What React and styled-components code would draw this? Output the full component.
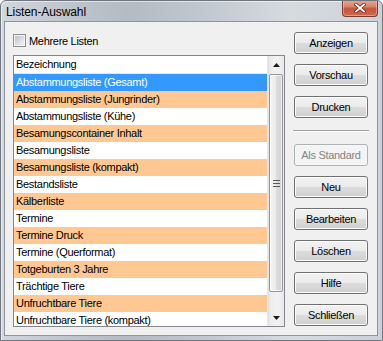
import React from "react";
import styled, { createGlobalStyle } from "styled-components";

const GlobalStyle = createGlobalStyle`
  html, body { margin: 0; padding: 0; background: #fff; }
  body {
    font-family: "Liberation Sans", Arial, sans-serif;
    font-size: 11px;
    letter-spacing: -0.3px;
    color: #000;
  }
  * { box-sizing: border-box; }
`;

const Window = styled.div`
  width: 383px;
  height: 341px;
  display: flex;
  flex-direction: column;
  border: 1px solid #6f767e;
  border-radius: 6px 6px 0 0;
  background: linear-gradient(to right, #d2d7dd 0%, #c0c6cd 16%, #b5bbc3 34%, #c3c9d0 55%, #d6dbe0 76%, #cbd1d7 100%);
  box-shadow: inset 1px 1px 0 rgba(255, 255, 255, 0.55);
  overflow: hidden;
`;

const TitleBar = styled.div`
  height: 20px;
  flex: none;
  display: flex;
  align-items: flex-start;
  justify-content: space-between;
  padding-left: 5px;
`;

const Title = styled.span`
  font-size: 12px;
  letter-spacing: -0.1px;
  line-height: 22px;
  color: #000;
`;

const CloseButton = styled.div`
  width: 36px;
  height: 17px;
  margin: -1px 4px 0 0;
  display: flex;
  align-items: center;
  justify-content: center;
  border: 1px solid #7a3a30;
  border-top: none;
  border-radius: 0 0 4px 4px;
  background: linear-gradient(#e9a897 0%, #d98470 40%, #c5543b 55%, #cf6a52 100%);
  box-shadow: inset 0 0 0 1px rgba(255, 210, 200, 0.45);
`;

const Client = styled.div`
  flex: 1;
  margin: 0 4px 4px 3px;
  border: 1px solid #8e959d;
  background: #f0f0f0;
  display: flex;
`;

const LeftPane = styled.div`
  padding: 12px 0 0 8px;
  display: flex;
  flex-direction: column;
`;

const CheckRow = styled.label`
  display: flex;
  align-items: center;
  height: 13px;
  gap: 3px;
  margin-bottom: 8px;
`;

const CheckBox = styled.span`
  width: 13px;
  height: 13px;
  border: 1px solid #8e8f8f;
  background: linear-gradient(135deg, #b9bdc2 0%, #e6e7e9 70%, #f2f2f2 100%);
  box-shadow: inset 0 0 0 1px #f4f4f4;
`;

const ListBox = styled.div`
  width: 272px;
  height: 272px;
  border: 1px solid #828790;
  background: #fff;
  display: flex;
  overflow: hidden;
`;

const ListBody = styled.div`
  flex: 1;
  display: flex;
  flex-direction: column;
  overflow: hidden;
`;

const Header = styled.div`
  height: 18px;
  flex: none;
  padding-left: 2px;
  line-height: 17px;
  border-bottom: 1px solid #e5e5e5;
`;

const Row = styled.div`
  height: 17px;
  flex: none;
  padding-left: 2px;
  line-height: 17px;
  white-space: nowrap;
  background: ${(p) => (p.$selected ? "#3399ff" : p.$alt ? "#ffc892" : "#fff")};
  color: ${(p) => (p.$selected ? "#fff" : "#000")};
`;

const ScrollBar = styled.div`
  width: 17px;
  flex: none;
  display: flex;
  flex-direction: column;
  background: linear-gradient(to right, #e2e2e2 0%, #eeeeee 20%, #f2f2f2 60%, #e8e8e8 100%);
  border-left: 1px solid #e6e6e6;
`;

const ArrowBtn = styled.div`
  height: 17px;
  flex: none;
  display: flex;
  align-items: center;
  justify-content: center;
`;

const Track = styled.div`
  flex: 1;
  padding: 1px 0 17px 1px;
  display: flex;
`;

const Thumb = styled.div`
  width: 14px;
  height: 218px;
  border: 1px solid #979797;
  border-radius: 2px;
  background: linear-gradient(to right, #f5f5f5 0%, #ececec 45%, #dcdcdc 55%, #d2d2d2 100%);
  box-shadow: inset 0 0 0 1px rgba(255, 255, 255, 0.7);
  display: flex;
  align-items: center;
  justify-content: center;
`;

const ButtonColumn = styled.div`
  margin-left: 9px;
  padding-top: 10px;
  display: flex;
  flex-direction: column;
  gap: 10px;
`;

const Button = styled.div`
  width: 74px;
  height: 22px;
  display: flex;
  align-items: center;
  justify-content: center;
  border: 1px solid ${(p) => (p.$disabled ? "#adb2b5" : "#707070")};
  border-radius: 3px;
  color: ${(p) => (p.$disabled ? "#838383" : "#000")};
  background: ${(p) =>
    p.$disabled
      ? "#f4f4f4"
      : "linear-gradient(#f2f2f2 0%, #ebebeb 50%, #dddddd 50%, #cfcfcf 100%)"};
  box-shadow: inset 0 0 0 1px ${(p) => (p.$disabled ? "#f8f8f8" : "#fcfcfc")};
`;

const Separator = styled.div`
  height: 2px;
  margin: 2px -1px 2px -1px;
  border-top: 1px solid #a0a0a0;
  border-bottom: 1px solid #fff;
`;

const items = [
  "Abstammungsliste (Gesamt)",
  "Abstammungsliste (Jungrinder)",
  "Abstammungsliste (Kühe)",
  "Besamungscontainer Inhalt",
  "Besamungsliste",
  "Besamungsliste (kompakt)",
  "Bestandsliste",
  "Kälberliste",
  "Termine",
  "Termine Druck",
  "Termine (Querformat)",
  "Totgeburten 3 Jahre",
  "Trächtige Tiere",
  "Unfruchtbare Tiere",
  "Unfruchtbare Tiere (kompakt)",
];

const CloseIcon = () => (
  <svg width="12" height="10" viewBox="0 0 12 10">
    <path d="M2 1.5 L10 8.5 M10 1.5 L2 8.5" stroke="#6b2418" strokeWidth="3.4" strokeLinecap="square" />
    <path d="M2 1.5 L10 8.5 M10 1.5 L2 8.5" stroke="#fff" strokeWidth="1.8" strokeLinecap="square" />
  </svg>
);

const Arrow = ({ up }) => (
  <svg width="7" height="4" viewBox="0 0 7 4">
    <path d={up ? "M3.5 0 L7 4 L0 4 Z" : "M0 0 L7 0 L3.5 4 Z"} fill="#1a1a1a" />
  </svg>
);

const Grip = () => (
  <svg width="7" height="7" viewBox="0 0 7 7">
    <path d="M0 0.5 H7 M0 3.5 H7 M0 6.5 H7" stroke="#5a5a5a" strokeWidth="1" />
  </svg>
);

export default function App() {
  return (
    <>
      <GlobalStyle />
      <Window>
        <TitleBar>
          <Title>Listen-Auswahl</Title>
          <CloseButton>
            <CloseIcon />
          </CloseButton>
        </TitleBar>
        <Client>
          <LeftPane>
            <CheckRow>
              <CheckBox />
              <span>Mehrere Listen</span>
            </CheckRow>
            <ListBox>
              <ListBody>
                <Header>Bezeichnung</Header>
                {items.map((t, i) => (
                  <Row key={t} $selected={i === 0} $alt={i % 2 === 1}>
                    {t}
                  </Row>
                ))}
              </ListBody>
              <ScrollBar>
                <ArrowBtn>
                  <Arrow up />
                </ArrowBtn>
                <Track>
                  <Thumb>
                    <Grip />
                  </Thumb>
                </Track>
                <ArrowBtn>
                  <Arrow />
                </ArrowBtn>
              </ScrollBar>
            </ListBox>
          </LeftPane>
          <ButtonColumn>
            <Button>Anzeigen</Button>
            <Button>Vorschau</Button>
            <Button>Drucken</Button>
            <Separator />
            <Button $disabled>Als Standard</Button>
            <Button>Neu</Button>
            <Button>Bearbeiten</Button>
            <Button>Löschen</Button>
            <Button>Hilfe</Button>
            <Button>Schließen</Button>
          </ButtonColumn>
        </Client>
      </Window>
    </>
  );
}
